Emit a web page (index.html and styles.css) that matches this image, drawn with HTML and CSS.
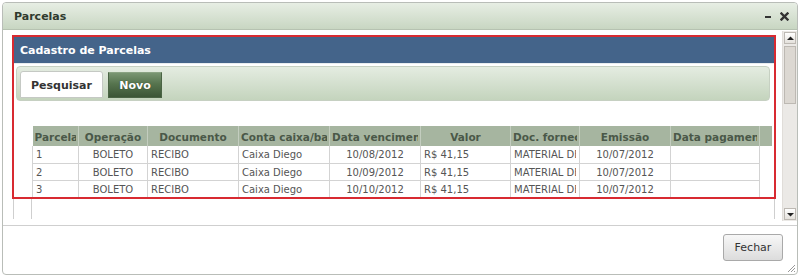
FILE: index.html
```html
<!DOCTYPE html>
<html lang="pt">
<head>
<meta charset="utf-8">
<title>Parcelas</title>
<link rel="stylesheet" href="styles.css">
</head>
<body>
<div class="dialog">
  <div class="titlebar">
    <span class="title">Parcelas</span>
    <span class="tools">
      <svg class="tool" width="9" height="9" viewBox="0 0 9 9"><rect x="1" y="4" width="6" height="2" fill="#333"/></svg>
      <svg class="tool" width="9" height="9" viewBox="0 0 9 9"><path d="M1.5 1.5 L7.5 7.5 M7.5 1.5 L1.5 7.5" stroke="#333" stroke-width="2.4" stroke-linecap="square"/></svg>
    </span>
  </div>
  <div class="main">
    <div class="content">
      <div class="panel">
        <div class="panel-head">Cadastro de Parcelas</div>
        <div class="tabbar">
          <div class="tab tab-active">Pesquisar</div>
          <div class="tab tab-new">Novo</div>
        </div>
        <div class="grid">
          <table class="tbl">
            <colgroup>
              <col class="c1"><col class="c2"><col class="c3"><col class="c4"><col class="c5"><col class="c6"><col class="c7"><col class="c8"><col class="c9"><col class="c10">
            </colgroup>
            <thead>
              <tr>
                <th><div class="clip">Parcela</div></th><th><div class="clip">Operação</div></th><th><div class="clip">Documento</div></th><th><div class="clip">Conta caixa/banco</div></th><th><div class="clip">Data vencimento</div></th><th><div class="clip">Valor</div></th><th><div class="clip">Doc. fornecedor</div></th><th><div class="clip">Emissão</div></th><th><div class="clip">Data pagamento</div></th><th></th>
              </tr>
            </thead>
            <tbody>
              <tr><td>1</td><td class="ctr">BOLETO</td><td>RECIBO</td><td>Caixa Diego</td><td class="ctr">10/08/2012</td><td>R$ 41,15</td><td><div class="clip">MATERIAL DE</div></td><td class="ctr">10/07/2012</td><td></td><td class="last"></td></tr>
              <tr><td>2</td><td class="ctr">BOLETO</td><td>RECIBO</td><td>Caixa Diego</td><td class="ctr">10/09/2012</td><td>R$ 41,15</td><td><div class="clip">MATERIAL DE</div></td><td class="ctr">10/07/2012</td><td></td><td class="last"></td></tr>
              <tr><td>3</td><td class="ctr">BOLETO</td><td>RECIBO</td><td>Caixa Diego</td><td class="ctr">10/10/2012</td><td>R$ 41,15</td><td><div class="clip">MATERIAL DE</div></td><td class="ctr">10/07/2012</td><td></td><td class="last"></td></tr>
            </tbody>
          </table>
        </div>
      </div>
      <div class="below"><div class="below-inner"></div></div>
    </div>
    <div class="scrollbar">
      <div class="sb-btn">
        <svg width="7" height="5" viewBox="0 0 7 5"><path d="M0 4 L3.5 0.5 L7 4 Z" fill="#222"/></svg>
      </div>
      <div class="sb-track"><div class="sb-thumb"></div></div>
      <div class="sb-btn">
        <svg width="7" height="5" viewBox="0 0 7 5"><path d="M0 1 L3.5 4.5 L7 1 Z" fill="#222"/></svg>
      </div>
    </div>
  </div>
  <div class="footer">
    <button class="btn">Fechar</button>
    <svg class="grip" width="9" height="9" viewBox="0 0 9 9"><path d="M8 1 L1 8 M8 4 L4 8 M8 7 L7 8" stroke="#999" stroke-width="1"/></svg>
  </div>
</div>
</body>
</html>
```

FILE: styles.css
```css
* { box-sizing: border-box; }
html, body { margin: 0; padding: 0; background: #fff; }
body {
  font-family: "DejaVu Sans", Verdana, sans-serif;
  font-size: 11px;
  color: #333;
}
.dialog {
  position: relative;
  margin: 2px;
  width: 796px;
  height: 273px;
  border: 1px solid #b9bdb8;
  border-radius: 4px;
  display: flex;
  flex-direction: column;
  background: #fff;
  overflow: hidden;
}
.titlebar {
  height: 27px;
  flex: none;
  display: flex;
  align-items: center;
  justify-content: space-between;
  padding: 0 8px 0 11px;
  background: linear-gradient(#e7eee4, #c8d6c2);
  border-bottom: 1px solid #b6c2b1;
  border-radius: 3px 3px 0 0;
}
.title { font-weight: bold; font-size: 11px; color: #2f3a2e; }
.tools { display: flex; gap: 7px; align-items: center; }
.tool { display: block; }
.main {
  height: 195px;
  flex: none;
  display: flex;
}
.content {
  width: 779px;
  padding: 5px 0 0 9px;
}
.panel {
  width: 764px;
  height: 164px;
  border: 2px solid #d82a31;
  overflow: hidden;
  display: flex;
  flex-direction: column;
}
.panel-head {
  height: 27px;
  flex: none;
  background: #44648a;
  color: #fff;
  font-weight: bold;
  font-size: 11px;
  line-height: 27px;
  padding-left: 6px;
  border-bottom: 1px solid #e8ecef;
}
.tabbar {
  flex: none;
  margin: 2px 4px 0 2px;
  height: 35px;
  border: 1px solid #c6d0c2;
  border-radius: 4px;
  background: linear-gradient(#e4ece1, #c4d4bd);
  display: flex;
  align-items: flex-end;
  gap: 5px;
  padding: 0 0 2px 3px;
}
.tab {
  height: 27px;
  line-height: 27px;
  font-weight: bold;
  font-size: 11px;
  text-align: center;
}
.tab-active {
  width: 83px;
  background: #fff;
  border: 1px solid #c5c9c4;
  border-radius: 3px 3px 0 0;
  color: #333;
}
.tab-new {
  width: 54px;
  height: 26px;
  line-height: 26px;
  background: linear-gradient(#7a9673 0%, #56744e 45%, #3b5535 100%);
  border: 1px solid #4a6444;
  border-top-color: #8aa383;
  color: #fff;
  text-shadow: 0 0 1px #2a3a26;
}
.grid {
  flex: none;
  margin-top: 25px;
  padding-left: 18px;
}
.tbl {
  border-collapse: collapse;
  table-layout: fixed;
  width: 739px;
}
.c1 { width: 46px; }
.c2 { width: 69px; }
.c3 { width: 91px; }
.c4 { width: 91px; }
.c5 { width: 91px; }
.c6 { width: 90px; }
.c7 { width: 69px; }
.c8 { width: 91px; }
.c9 { width: 89px; }
.c10 { width: 12px; }
.clip {
  overflow: hidden;
  white-space: nowrap;
  text-overflow: clip;
}
.tbl th {
  height: 20px;
  padding: 1px 2px 0;
  background: #a6b5a0;
  color: #4a5848;
  font-weight: bold;
  font-size: 10.5px;
  text-align: center;
  white-space: nowrap;
  overflow: hidden;
  border-left: 1px solid #c3cdbf;
}
.tbl th:first-child { border-left: none; }
.tbl td {
  height: 17px;
  padding: 1px 3px 0;
  font-size: 10px;
  color: #555;
  white-space: nowrap;
  overflow: hidden;
  border: 1px solid #d3d3d3;
  border-top: none;
}
.tbl td.ctr { text-align: center; }
.tbl td.last { border-left: 1px solid #d3d3d3; border-right: none; border-bottom: none; }
.below {
  margin-left: 1px;
  width: 762px;
  height: 20px;
  border-left: 1px solid #cfcfcf;
  border-right: 1px solid #cfcfcf;
}
.below-inner {
  margin-left: 17px;
  height: 100%;
  border-left: 1px solid #cfcfcf;
}
.scrollbar {
  width: 15px;
  height: 190px;
  margin-top: 1px;
  display: flex;
  flex-direction: column;
  background: #ebe9e6;
  border-left: 1px solid #e0ddd9;
}
.sb-btn {
  height: 12px;
  flex: none;
  margin: 1px;
  border: 1px solid #bdb9b3;
  background: linear-gradient(#fff, #e4e1dc);
  display: flex;
  align-items: center;
  justify-content: center;
}
.sb-track { flex: 1; padding: 1px 1px; }
.sb-thumb {
  height: 58px;
  border: 1px solid #bdb9b3;
  background: #dcd8d2;
}
.footer {
  flex: 1;
  border-top: 1px solid #cfcfcf;
  display: flex;
  justify-content: flex-end;
  align-items: flex-start;
  padding: 8px 14px 0 0;
}
.btn {
  width: 60px;
  height: 27px;
  font-family: "DejaVu Sans", Verdana, sans-serif;
  font-size: 11px;
  color: #333;
  border: 1px solid #a9a9a9;
  border-radius: 3px;
  background: linear-gradient(#f7f7f7, #dcdcdc);
  padding: 0;
}
.grip { position: absolute; right: 1px; bottom: 1px; }
```
